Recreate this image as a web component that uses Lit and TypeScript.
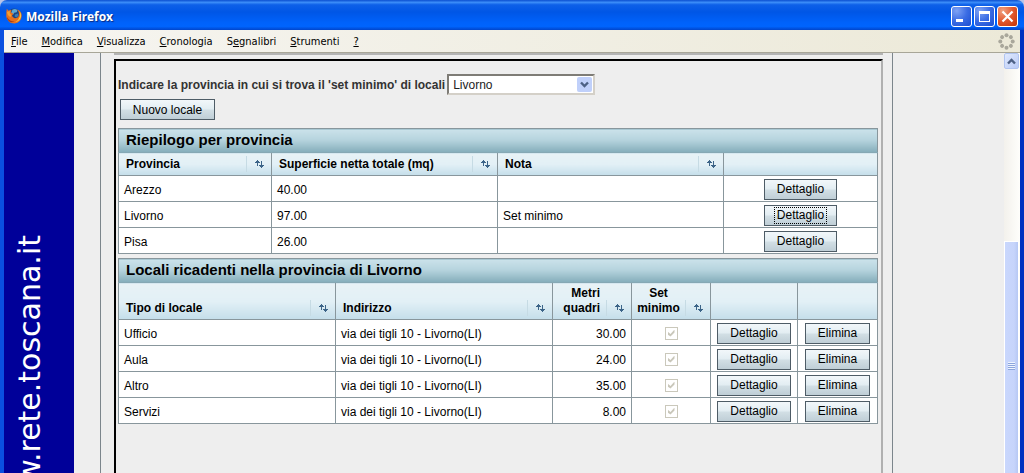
import { LitElement, html, css, svg, nothing } from "lit";
import { customElement, property } from "lit/decorators.js";

const sortIcon = svg`
  <svg width="9" height="8" viewBox="0 0 9 8" shape-rendering="crispEdges" aria-hidden="true">
    <path fill="#3c6488" d="M2 0h1v1h1v1h1v1H3v3H2V3H0V2h1V1h1z M6 1h1v4h2v1H8v1H7v1H6V7H5V6H4V5h2z"/>
  </svg>`;

const chevron = (up: boolean) => svg`
  <svg width="9" height="7" viewBox="0 0 9 7" aria-hidden="true">
    <path fill="none" stroke="#4d6185" stroke-width="2.4" d="${up ? "M1 5.5L4.5 2L8 5.5" : "M1 1.5L4.5 5L8 1.5"}"/>
  </svg>`;

const foxIcon = svg`
  <svg width="16" height="16" viewBox="0 0 16 16" aria-hidden="true">
    <circle cx="8" cy="7" r="6.500" fill="#1c4480"/>
    <path fill="#5fa8d0" d="M6.500 1.500q3-1.500 5 .8l-.8 2-2.500.5-1 1.700-2-1.500z"/>
    <path fill="#3a7cb4" d="M9 6.500l3-1 .6 2-2 2-2-1z"/>
    <path fill="#e8701c" d="M.8.8l1.700 2Q4 1.600 5.500 2.300L4.800 4.300 7.500 6 6 7.300Q6.300 10 8.800 10.200q3.400 0 4.200-3.200.5-3-1.800-5.500Q15.800 3 15.700 8 15 15 8.500 15.500 1.300 15 .3 8.500 0 4 .8.800z"/>
    <path fill="#f8cc44" d="M13.300 2.800Q15.600 6 15 9q-1.500 4.200-5.800 5.200 3.800-2.500 4.700-5.700.5-3-.6-5.700z"/>
    <path fill="#f4a030" d="M1 4q1.500-1.200 3.300-.6L3.500 5 5.500 7 4.500 9Q1.500 8 1 4z"/>
    <path fill="#a83c14" d="M1 9q2.500 4.500 7.500 4.600-3 1.400-5.500-.3T1 9z"/>
  </svg>`;

const throbber = svg`
  <svg width="17" height="17" viewBox="0 0 17 17" fill="#a9a79b" aria-hidden="true">
    ${[0, 45, 90, 135, 180, 225, 270, 315].map(
      (a) => svg`<circle cx="8.500" cy="2.300" r="2" transform="rotate(${a} 8.500 8.500)"/>`
    )}
  </svg>`;

interface Column {
  label: string;
  width?: string;
  kind?: "text" | "number" | "check" | "action";
}

@customElement("data-grid")
class DataGrid extends LitElement {
  @property() heading = "";
  @property({ attribute: false }) columns: Column[] = [];
  @property({ attribute: false }) rows: (string | boolean)[][] = [];
  @property({ type: Number }) current = -1;

  static styles = css`
    :host { display: block; }
    table {
      width: 100%;
      table-layout: fixed;
      border-collapse: collapse;
      background: #fff;
      color: #000;
      font-size: 12px;
      line-height: 15px;
    }
    th, td { border: 1px solid #88969c; padding: 0; }
    .title {
      height: 21px;
      padding: 0 7px 2px;
      text-align: left;
      font-size: 15px;
      border-bottom-color: #86a8b4;
      background: linear-gradient(#cbe2ea, #b6d4de 45%, #84adba);
    }
    .head {
      vertical-align: bottom;
      background: linear-gradient(#e8f2f6, #e2f0f6 50%, #c4deea);
    }
    .label { display: flex; align-items: flex-end; padding: 3px 0; text-align: left; }
    .label span { flex: 1; padding: 0 7px 0 7px; }
    .number .label span { text-align: right; padding: 0 6px; }
    .check .label span { text-align: center; padding: 0 4px; }
    .sort {
      display: flex;
      align-items: center;
      justify-content: center;
      width: 25px;
      height: 16px;
      padding: 0;
      border: 0;
      border-left: 1px solid #c6dbe4;
      background: none;
    }
    td { height: 21px; padding-top: 4px; }
    td.text { padding-left: 5px; padding-right: 5px; }
    td.number { padding-left: 5px; padding-right: 5px; text-align: right; }
    td.check, td.action { height: 24px; padding-top: 1px; text-align: center; vertical-align: middle; line-height: 0; }
    .btn {
      display: inline-flex;
      align-items: center;
      justify-content: center;
      height: 21px;
      padding: 0 9px;
      border: 1px solid #4e5c66;
      border-radius: 0;
      background: linear-gradient(#f2f7fa, #e2edf2 48%, #d2dfe5 52%, #bfced6);
      font: inherit;
      line-height: 15px;
      color: #000;
      vertical-align: middle;
    }
    .btn span { border: 1px dotted transparent; padding: 0 2px; }
    .btn.current span { border-color: #000; }
    .box {
      appearance: none;
      display: inline-grid;
      place-content: center;
      width: 13px;
      height: 13px;
      margin: 0;
      border: 1px solid #cac8bb;
      background: #fff;
      vertical-align: middle;
    }
    .box:checked::before {
      content: "";
      width: 7px;
      height: 7px;
      background: #c9c7ba;
      clip-path: polygon(0 29%, 43% 64%, 100% 0, 100% 43%, 43% 100%, 0 71%);
    }
  `;

  private cell(value: string | boolean, col: Column, row: (string | boolean)[], index: number) {
    if (col.kind === "action")
      return html`<button type="button" class="btn ${index === this.current ? "current" : ""}"><span>${value}</span></button>`;
    if (col.kind === "check")
      return html`<input class="box" type="checkbox" aria-label="Set minimo ${row[0]}" .checked=${!!value} disabled />`;
    return value;
  }

  render() {
    return html`
      <table>
        <colgroup>${this.columns.map((c) => html`<col style=${c.width ? `width:${c.width}` : nothing} />`)}</colgroup>
        <thead>
          <tr><th class="title" colspan=${this.columns.length}>${this.heading}</th></tr>
          <tr>
            ${this.columns.map((c) => html`
              <th class="head ${c.kind ?? "text"}">
                ${c.label
                  ? html`<div class="label"><span>${c.label}</span><button type="button" class="sort" aria-label="Ordina ${c.label}">${sortIcon}</button></div>`
                  : nothing}
              </th>`)}
          </tr>
        </thead>
        <tbody>
          ${this.rows.map((r, i) => html`
            <tr>${this.columns.map((c, j) => html`<td class=${c.kind ?? "text"}>${this.cell(r[j], c, r, i)}</td>`)}</tr>`)}
        </tbody>
      </table>`;
  }
}

@customElement("app-root")
class AppRoot extends LitElement {
  static styles = css`
    :host {
      display: flex;
      flex-direction: column;
      height: 100vh;
      overflow: hidden;
      background: #eee;
      color: #000;
      font-family: "Liberation Sans", Arial, sans-serif;
      font-size: 12px;
    }
    .titlebar {
      display: flex;
      align-items: center;
      flex: none;
      gap: 4px;
      box-sizing: border-box;
      height: 30px;
      padding: 2px 6px 0;
      border-radius: 7px 7px 0 0;
      background: linear-gradient(#0b4fd0, #3b8cf8 8%, #0e60e8 16%, #0056e6 40%, #0062fb 75%, #0064fe 88%, #0145cb);
      color: #fff;
    }
    .corner { background: #b9c4e8; flex: none; }
    .titlebar h1 {
      flex: 1;
      margin: 0;
      padding-top: 1px;
      font: bold 12px/16px "Noto Sans", sans-serif;
      text-shadow: 1px 1px 1px #0a2a80;
    }
    .controls { display: flex; gap: 2px; }
    .control {
      display: grid;
      place-items: center;
      width: 21px;
      height: 21px;
      padding: 0;
      border: 1px solid #fff;
      border-radius: 3px;
      background: radial-gradient(circle at 25% 20%, #7ea2f4, #3a6ce4 50%, #1b4dd0);
    }
    .control.close { background: radial-gradient(circle at 25% 20%, #f0a080, #e2582e 50%, #c23408); }
    .frame {
      display: flex;
      flex-direction: column;
      flex: 1;
      min-height: 0;
      border: solid #0a50e0;
      border-width: 0 4px;
      border-right-color: #0030c0;
    }
    .menubar {
      display: flex;
      align-items: center;
      flex: none;
      gap: 14px;
      box-sizing: border-box;
      height: 23px;
      padding: 1px 5px 0 7px;
      border-bottom: 1px solid #a8a698;
      background: linear-gradient(90deg, #f6f5f1, #ece9d8);
      font: 11px/14px "DejaVu Sans Condensed", "DejaVu Sans", sans-serif;
    }
    .menubar a { color: #000; text-decoration: none; }
    .spacer { flex: 1; }
    .menubar svg, .titlebar svg { display: block; }
    .body { display: flex; flex: 1; min-height: 0; }
    .band {
      flex: none;
      box-sizing: border-box;
      width: 70px;
      padding: 182px 0 0 7px;
      overflow: hidden;
      background: #000099;
      color: #fff;
      font: 30px/38px "DejaVu Sans", sans-serif;
    }
    .band span { display: block; writing-mode: vertical-rl; transform: rotate(180deg); white-space: nowrap; }
    .page {
      display: flex;
      flex-direction: column;
      flex: 1;
      min-width: 0;
      margin: 0 111px 0 26px;
      padding: 0 9px 0 13px;
      border: solid #7c868c;
      border-width: 0 1px;
    }
    .previous { flex: none; height: 2px; margin-bottom: 4px; background: #b4b4b4; }
    .panel {
      display: flex;
      flex-direction: column;
      flex: 1;
      min-height: 0;
      padding: 13px 3px 0 2px;
      border: 2px solid #000;
      border-right-color: #b0b0b0;
      border-bottom: 0;
    }
    .field { display: flex; align-items: center; gap: 2px; color: #333; font-weight: bold; }
    .select { display: grid; align-items: center; width: 148px; height: 21px; }
    .select select, .select .arrow { grid-area: 1 / 1; }
    .select select {
      appearance: none;
      width: 148px;
      height: 21px;
      padding: 0 20px 0 4px;
      border: 2px solid #d4d0c8;
      border-top-color: #7e7c76;
      border-left-color: #7e7c76;
      border-radius: 0;
      background: #fff;
      color: #222;
      font: 12px "Liberation Sans", Arial, sans-serif;
    }
    .arrow {
      display: grid;
      place-items: center;
      justify-self: end;
      width: 15px;
      height: 15px;
      margin-right: 3px;
      border-radius: 2px;
      background: #c0d0fa;
      pointer-events: none;
    }
    .new {
      align-self: flex-start;
      flex: none;
      width: 95px;
      height: 21px;
      margin: 4px 2px 8px;
      padding: 0;
      border: 1px solid #4e5c66;
      background: linear-gradient(#f2f7fa, #e2edf2 48%, #d2dfe5 52%, #bfced6);
      color: #000;
      font: 12px "Liberation Sans", Arial, sans-serif;
    }
    data-grid + data-grid { margin-top: 4px; }
    .scroll {
      display: flex;
      flex-direction: column;
      flex: none;
      width: 16px;
      background: linear-gradient(90deg, #f3f1ec, #fefefb);
    }
    .up {
      display: grid;
      place-items: center;
      width: 15px;
      height: 16px;
      padding: 0;
      border: 1px solid #b0c4f0;
      border-radius: 2px;
      background: linear-gradient(135deg, #e0e9fe, #b9cbf6);
    }
    .thumb {
      display: flex;
      flex-direction: column;
      align-items: center;
      gap: 1px;
      flex: 1;
      box-sizing: border-box;
      width: 15px;
      margin-top: 172px;
      padding-top: 120px;
      border: 1px solid #fff;
      border-bottom: 0;
      background: linear-gradient(90deg, #c9d7fd, #c6d4fb 70%, #b6c8f4);
    }
    .thumb i { width: 7px; height: 1px; background: #eef4fe; border-bottom: 1px solid #8ca5dc; margin-bottom: -1px; }
  `;

  private menu = [["", "F", "ile"], ["", "M", "odifica"], ["", "V", "isualizza"], ["", "C", "ronologia"], ["S", "e", "gnalibri"], ["", "S", "trumenti"], ["", "?", ""]];

  private provinceCols: Column[] = [
    { label: "Provincia", width: "153px" },
    { label: "Superficie netta totale (mq)", width: "226px" },
    { label: "Nota", width: "226px" },
    { label: "", kind: "action" },
  ];
  private provinces = [
    ["Arezzo", "40.00", "", "Dettaglio"],
    ["Livorno", "97.00", "Set minimo", "Dettaglio"],
    ["Pisa", "26.00", "", "Dettaglio"],
  ];

  private roomCols: Column[] = [
    { label: "Tipo di locale", width: "217px" },
    { label: "Indirizzo", width: "217px" },
    { label: "Metri quadri", width: "79px", kind: "number" },
    { label: "Set minimo", width: "79px", kind: "check" },
    { label: "", width: "87px", kind: "action" },
    { label: "", kind: "action" },
  ];
  private rooms = [["Ufficio", "30.00"], ["Aula", "24.00"], ["Altro", "35.00"], ["Servizi", "8.00"]].map(
    ([name, area]) => [name, "via dei tigli 10 - Livorno(LI)", area, true, "Dettaglio", "Elimina"]
  );

  render() {
    return html`
      <div class="corner"><header class="titlebar">
        ${foxIcon}
        <h1>Mozilla Firefox</h1>
        <div class="controls">
          <button class="control" aria-label="Riduci"><svg width="13" height="13"><path fill="#fff" d="M1 9h7v3H1z"/></svg></button>
          <button class="control" aria-label="Ingrandisci"><svg width="13" height="13"><path fill="#fff" fill-rule="evenodd" d="M1 1h11v11H1z M2 4v7h9V4z"/></svg></button>
          <button class="control close" aria-label="Chiudi"><svg width="13" height="13"><path stroke="#fff" stroke-width="2.200" d="M1.500 1.500l10 10M11.500 1.500l-10 10"/></svg></button>
        </div>
      </header></div>
      <div class="frame">
        <nav class="menubar">
          ${this.menu.map(([a, b, c]) => html`<a href="#">${a}<u>${b}</u>${c}</a>`)}
          <span class="spacer"></span>
          ${throbber}
        </nav>
        <div class="body">
          <aside class="band"><span>www.rete.toscana.it</span></aside>
          <main class="page">
            <div class="previous"></div>
            <section class="panel">
              <div class="field">
                <label for="prov">Indicare la provincia in cui si trova il 'set minimo' di locali</label>
                <div class="select">
                  <select id="prov"><option>Livorno</option><option>Arezzo</option><option>Pisa</option></select>
                  <span class="arrow">${chevron(false)}</span>
                </div>
              </div>
              <button class="new" type="button">Nuovo locale</button>
              <data-grid heading="Riepilogo per provincia" .columns=${this.provinceCols} .rows=${this.provinces} current="1"></data-grid>
              <data-grid heading="Locali ricadenti nella provincia di Livorno" .columns=${this.roomCols} .rows=${this.rooms}></data-grid>
            </section>
          </main>
          <div class="scroll">
            <button class="up" aria-label="Scorri in alto">${chevron(true)}</button>
            <div class="thumb"><i></i><i></i><i></i><i></i></div>
          </div>
        </div>
      </div>`;
  }
}
